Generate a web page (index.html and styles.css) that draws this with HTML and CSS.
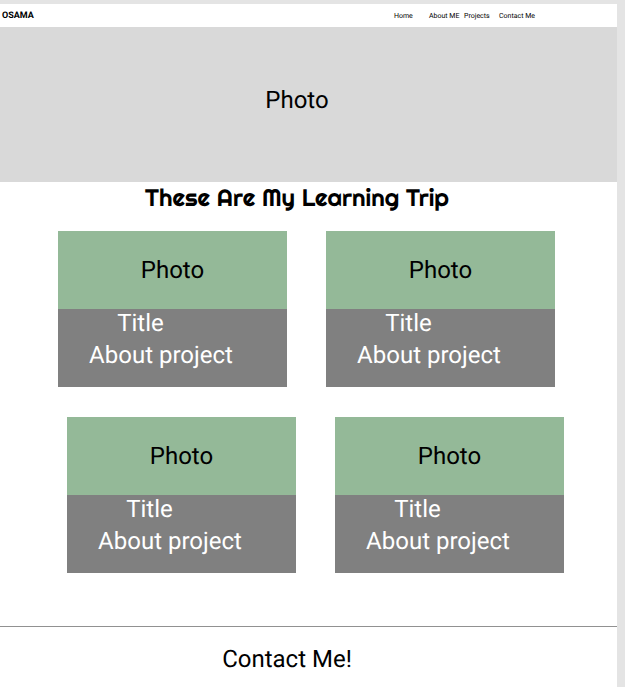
FILE: index.html
```html
<!DOCTYPE html>
<html lang="en">
<head>
<meta charset="utf-8">
<meta name="viewport" content="width=device-width, initial-scale=1">
<title>Osama</title>
<link rel="stylesheet" href="styles.css">
</head>
<body>
<div class="page">
  <header class="header">
    <strong class="brand">OSAMA</strong>
    <nav class="nav">
      <a href="#home">Home</a>
      <a href="#about">About ME</a>
      <a href="#projects">Projects</a>
      <a href="#contact">Contact Me</a>
    </nav>
  </header>
  <main>
    <section class="hero" id="home">Photo</section>
    <section id="projects">
      <h1 class="heading">These Are My Learning Trip</h1>
      <div class="row">
        <article class="card">
          <div class="card-photo">Photo</div>
          <div class="card-body">
            <h2 class="card-title">Title</h2>
            <p class="card-text">About project</p>
          </div>
        </article>
        <article class="card">
          <div class="card-photo">Photo</div>
          <div class="card-body">
            <h2 class="card-title">Title</h2>
            <p class="card-text">About project</p>
          </div>
        </article>
      </div>
      <div class="row row-shifted">
        <article class="card">
          <div class="card-photo">Photo</div>
          <div class="card-body">
            <h2 class="card-title">Title</h2>
            <p class="card-text">About project</p>
          </div>
        </article>
        <article class="card">
          <div class="card-photo">Photo</div>
          <div class="card-body">
            <h2 class="card-title">Title</h2>
            <p class="card-text">About project</p>
          </div>
        </article>
      </div>
    </section>
  </main>
  <footer class="contact" id="contact">
    <h2 class="contact-title">Contact Me!</h2>
  </footer>
</div>
</body>
</html>
```
FILE: styles.css
```css
* {
  box-sizing: border-box;
}

body {
  margin: 0;
  padding: 4px 8px 0 0;
  background: #e4e4e4;
  color: #000;
  font-family: Roboto, "Liberation Sans", sans-serif;
  font-size: 24px;
  line-height: 32px;
  text-rendering: geometricPrecision;
}

h1,
h2,
p {
  margin: 0;
  font-size: 24px;
  font-weight: 400;
}

.page {
  min-height: calc(100vh - 4px);
  background: #fff;
}

.header {
  display: flex;
  align-items: center;
  justify-content: space-between;
  padding: 1px 83px 0 2px;
  line-height: 22px;
}

.brand {
  font-size: 9px;
}

.nav {
  display: grid;
  grid-template-columns: repeat(4, 35px);
  font-size: 7px;
}

.nav a {
  color: inherit;
  text-decoration: none;
  white-space: nowrap;
}

.hero {
  display: flex;
  align-items: center;
  justify-content: center;
  height: 155px;
  padding: 0 23px 10px 0;
  background: #d9d9d9;
}

.heading {
  padding: 0 23px 17px 0;
  font-family: Righteous, Lato, sans-serif;
  text-align: center;
}

.row {
  display: flex;
  gap: 39px;
  padding: 0 62px 0 58px;
}

.row-shifted {
  padding: 30px 53px 53px 67px;
}

.card {
  flex: 1;
  text-align: center;
}

.card-photo {
  display: flex;
  align-items: center;
  justify-content: center;
  height: 78px;
  background: #94b998;
}

.card-body {
  height: 78px;
  background: #808080;
  color: #fff;
}

.card-title {
  padding-right: 64px;
  line-height: 28px;
}

.card-text {
  padding-right: 23px;
  line-height: 36px;
}

.contact {
  padding: 17px 43px 12px 0;
  box-shadow: inset 0 1px #919191;
  text-align: center;
}
```
